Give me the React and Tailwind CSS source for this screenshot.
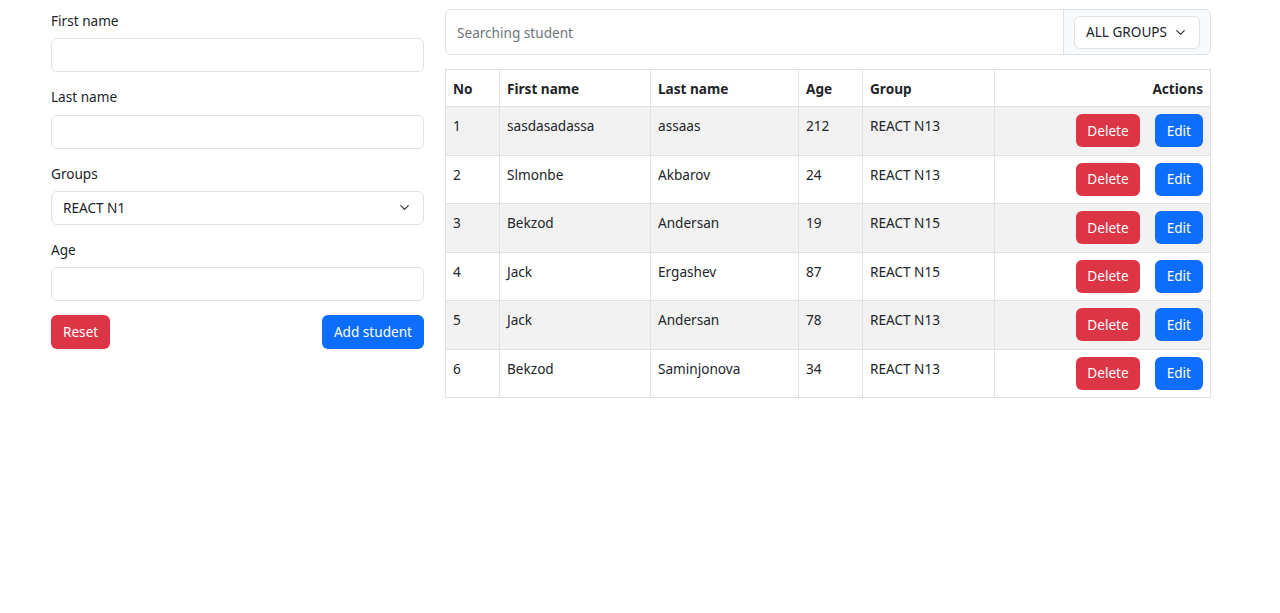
import React from "react";
import { ChevronDown } from "lucide-react";

const students = [
  { id: 1, first: "sasdasadassa", last: "assaas", age: 212, group: "REACT N13" },
  { id: 2, first: "Slmonbe", last: "Akbarov", age: 24, group: "REACT N13" },
  { id: 3, first: "Bekzod", last: "Andersan", age: 19, group: "REACT N15" },
  { id: 4, first: "Jack", last: "Ergashev", age: 87, group: "REACT N15" },
  { id: 5, first: "Jack", last: "Andersan", age: 78, group: "REACT N13" },
  { id: 6, first: "Bekzod", last: "Saminjonova", age: 34, group: "REACT N13" },
];

function Field({ label, children }) {
  return (
    <div className="flex flex-col">
      <label className="h-[29.3px] pt-[2px] leading-[20px]">{label}</label>
      {children}
    </div>
  );
}

const inputCls =
  "h-[34px] w-full rounded-[6px] border border-[#dee2e6] bg-white px-[11px] outline-none";

export default function App() {
  return (
    <div
      className="min-h-screen bg-white text-[13.6px] text-[#212529]"
      style={{ fontFamily: '"Noto Sans", "Open Sans", sans-serif' }}
    >
      <div className="flex gap-[21px] pl-[51px] pr-[69px] pt-[9px]">
        {/* Form */}
        <div className="flex w-[373px] shrink-0 flex-col gap-[13px]">
          <Field label="First name">
            <input className={inputCls} />
          </Field>
          <Field label="Last name">
            <input className={inputCls} />
          </Field>
          <Field label="Groups">
            <div className={inputCls + " flex items-center justify-between"}>
              <span>REACT N1</span>
              <ChevronDown size={15} strokeWidth={2} className="text-[#343a40]" />
            </div>
          </Field>
          <Field label="Age">
            <input className={inputCls} />
          </Field>
          <div className="flex justify-between pt-[1px]">
            <button className="h-[34px] rounded-[6px] bg-[#dc3545] px-[12px] text-white">
              Reset
            </button>
            <button className="h-[34px] rounded-[6px] bg-[#0d6efd] px-[12px] text-white">
              Add student
            </button>
          </div>
        </div>

        {/* List */}
        <div className="flex flex-1 flex-col gap-[14px]">
          <div className="flex h-[46px] rounded-[6px] border border-[#dee2e6]">
            <input
              placeholder="Searching student"
              className="flex-1 rounded-l-[6px] px-[11px] pt-[2px] outline-none placeholder:text-[#6c757d]"
            />
            <div className="flex items-center rounded-r-[6px] border-l border-[#dee2e6] bg-[#f8f9fa] px-[10px]">
              <div className="flex h-[33px] w-[126px] items-center justify-between rounded-[6px] border border-[#dee2e6] bg-white px-[11px] pt-[1px]">
                <span>ALL GROUPS</span>
                <ChevronDown size={15} strokeWidth={2} className="text-[#343a40]" />
              </div>
            </div>
          </div>

          <table className="w-full border-collapse border border-[#dee2e6]">
            <thead>
              <tr className="h-[37px] text-left font-bold">
                <th className="w-[54px] border border-[#dee2e6] px-[7px] pt-[2px]">No</th>
                <th className="w-[151px] border border-[#dee2e6] px-[7px] pt-[2px]">First name</th>
                <th className="w-[148px] border border-[#dee2e6] px-[7px] pt-[2px]">Last name</th>
                <th className="w-[64px] border border-[#dee2e6] px-[7px] pt-[2px]">Age</th>
                <th className="w-[132px] border border-[#dee2e6] px-[7px] pt-[2px]">Group</th>
                <th className="border border-[#dee2e6] px-[7px] pt-[2px] text-right">Actions</th>
              </tr>
            </thead>
            <tbody>
              {students.map((s, i) => (
                <tr key={s.id} className={i % 2 === 0 ? "bg-[#f2f2f2]" : "bg-white"}>
                  <td className="h-[48.5px] border border-[#dee2e6] px-[7px] pt-[9px] align-top">{s.id}</td>
                  <td className="border border-[#dee2e6] px-[7px] pt-[9px] align-top">{s.first}</td>
                  <td className="border border-[#dee2e6] px-[7px] pt-[9px] align-top">{s.last}</td>
                  <td className="border border-[#dee2e6] px-[7px] pt-[9px] align-top">{s.age}</td>
                  <td className="border border-[#dee2e6] px-[7px] pt-[9px] align-top">{s.group}</td>
                  <td className="border border-[#dee2e6] px-[7px]">
                    <div className="flex justify-end gap-[15px]">
                      <button className="h-[33px] rounded-[6px] bg-[#dc3545] px-[11px] text-white">
                        Delete
                      </button>
                      <button className="h-[33px] rounded-[6px] bg-[#0d6efd] px-[12px] text-white">
                        Edit
                      </button>
                    </div>
                  </td>
                </tr>
              ))}
            </tbody>
          </table>
        </div>
      </div>
    </div>
  );
}
